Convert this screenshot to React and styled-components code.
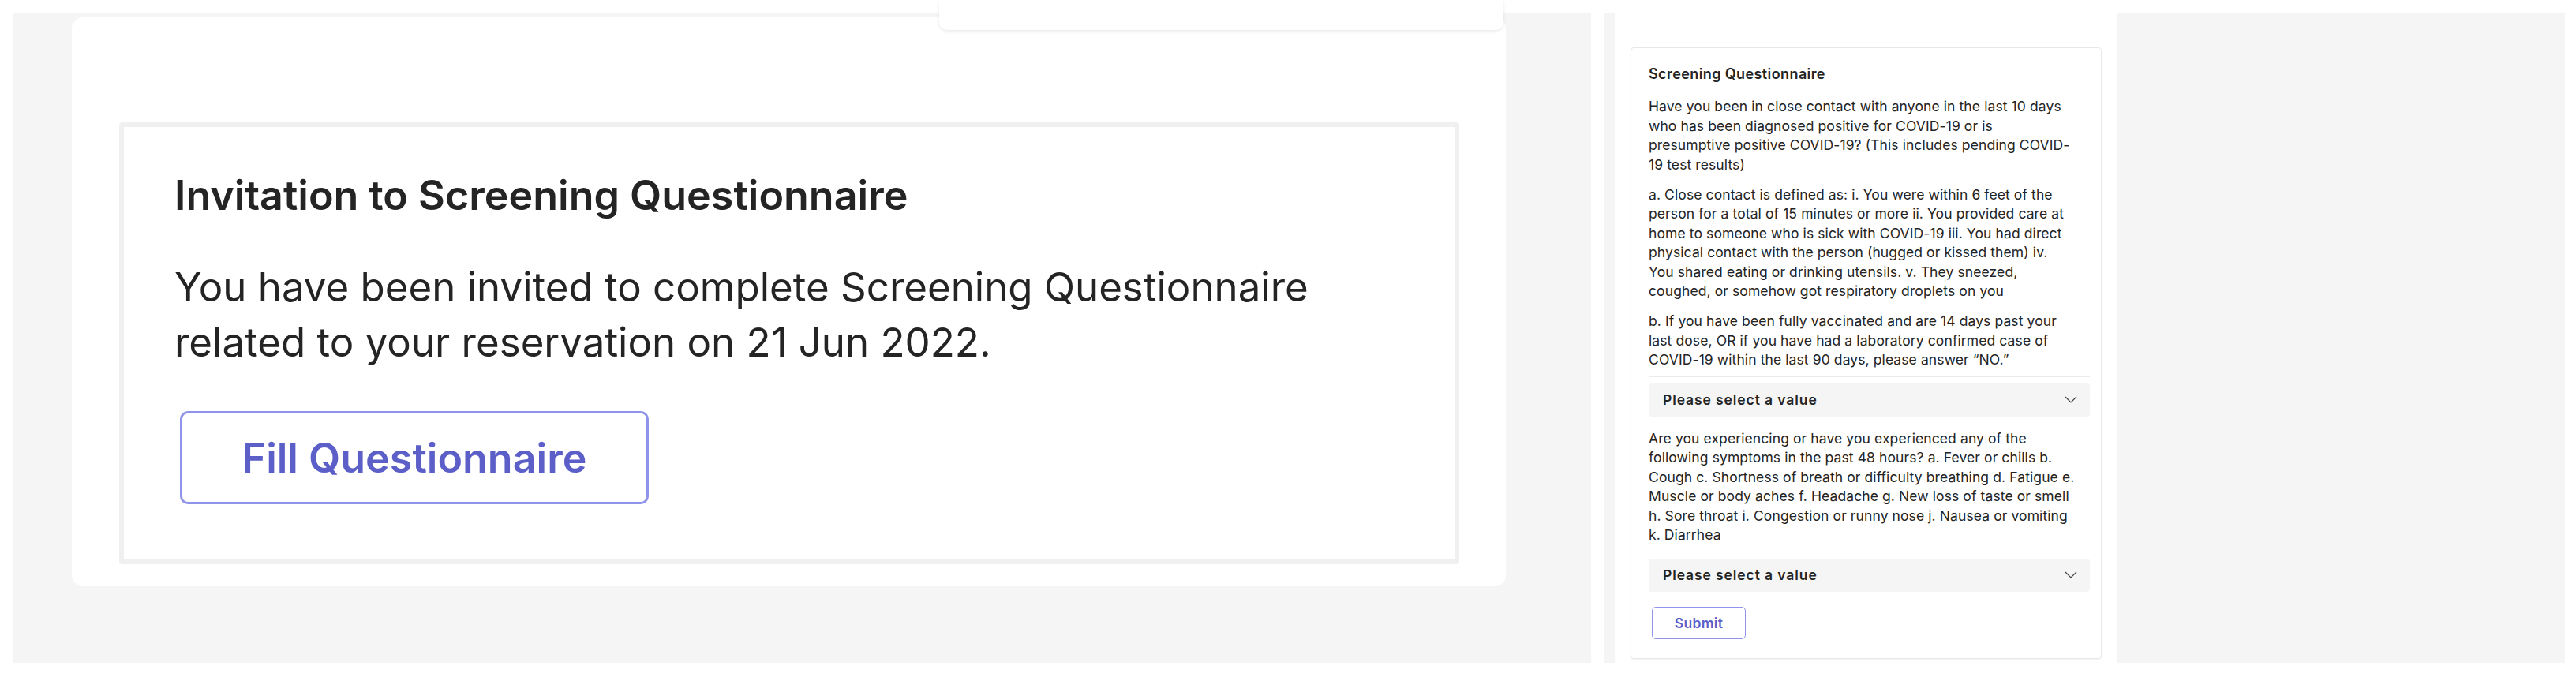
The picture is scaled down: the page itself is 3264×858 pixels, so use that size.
import React from 'react'
import styled, { createGlobalStyle } from 'styled-components'

const Global = createGlobalStyle`
  html, body {
    margin: 0;
    padding: 0;
    background: #ffffff;
  }
  body {
    font-family: Inter, "Liberation Sans", sans-serif;
    color: #242424;
  }
`

const Page = styled.div`
  display: flex;
  align-items: stretch;
  height: 823px;
  padding: 17px 0 0 17px;
`

const ChatPane = styled.div`
  position: relative;
  width: 1999px;
  background: #f5f5f5;
  padding: 5px 108px 0 74px;
  box-sizing: border-box;
`

const Popover = styled.div`
  position: absolute;
  left: 1173px;
  top: -17px;
  width: 715px;
  height: 38px;
  background: #ffffff;
  border-radius: 0 0 10px 10px;
  box-shadow: 0 2px 4px rgba(0, 0, 0, 0.08);
`

const MessageCard = styled.div`
  height: 721px;
  box-sizing: border-box;
  background: #ffffff;
  border-radius: 14px;
  padding: 133px 59px 27px 60px;
`

const InviteBox = styled.div`
  border: 6px solid #f0f0f0;
  border-radius: 4px;
  padding: 56px 64px 70px 64px;
  display: flex;
  flex-direction: column;
  align-items: flex-start;
`

const InviteTitle = styled.h2`
  margin: 0;
  font-size: 52px;
  line-height: 62px;
  font-weight: 600;
`

const InviteText = styled.p`
  margin: 50px 0 52px;
  font-size: 51px;
  line-height: 70px;
  font-weight: 400;
`

const BigButton = styled.button`
  margin-left: 7px;
  width: 594px;
  height: 118px;
  background: #ffffff;
  border: 3px solid #8f94ea;
  border-radius: 10px;
  color: #5b5fc7;
  font-family: inherit;
  font-size: 52px;
  font-weight: 600;
`

const Spacer = styled.div`
  width: ${p => p.w}px;
  background: ${p => (p.gray ? '#f5f5f5' : '#ffffff')};
`

const FormColumn = styled.div`
  width: 637px;
  background: #ffffff;
  padding: 43px 20px 0 20px;
  box-sizing: border-box;
`

const FormCard = styled.div`
  border: 1px solid #e8e8e8;
  border-radius: 4px;
  box-shadow: 0 1px 2px rgba(0, 0, 0, 0.06);
  padding: 21px 14px 24px 22px;
`

const FormTitle = styled.div`
  font-size: 18px;
  line-height: 24px;
  font-weight: 600;
  letter-spacing: 0.4px;
  margin-bottom: 17px;
`

const Question = styled.div`
  margin-top: ${p => (p.first ? 0 : 16)}px;
`

const Label = styled.div`
  padding-bottom: 8px;
  border-bottom: 1.5px solid #ebebeb;
`

const Para = styled.p`
  margin: 0 0 13.5px;
  font-size: 17.5px;
  line-height: 24.5px;
  letter-spacing: 0.1px;
  &:last-child {
    margin-bottom: 0;
  }
`

const Line = styled.span`
  display: block;
  white-space: nowrap;
`

const Select = styled.div`
  margin-top: 8px;
  height: 42px;
  background: #f5f5f5;
  border-radius: 4px;
  display: flex;
  align-items: center;
  justify-content: space-between;
  padding: 0 16px 0 18px;
  font-size: 17.5px;
  font-weight: 600;
  letter-spacing: 0.9px;
`

const SubmitButton = styled.button`
  margin: 19px 0 0 4px;
  width: 119px;
  height: 41px;
  background: #ffffff;
  border: 1.5px solid #8f94ea;
  border-radius: 5px;
  color: #5b5fc7;
  font-family: inherit;
  font-size: 17.5px;
  font-weight: 600;
  letter-spacing: 0.3px;
`

const Chevron = () => (
  <svg width="16" height="9" viewBox="0 0 16 9">
    <polyline points="1,1 8,8 15,1" fill="none" stroke="#424242" strokeWidth="1.2" />
  </svg>
)

const questions = [
  [
    [
      'Have you been in close contact with anyone in the last 10 days',
      'who has been diagnosed positive for COVID-19 or is',
      'presumptive positive COVID-19? (This includes pending COVID-',
      '19 test results)',
    ],
    [
      'a. Close contact is defined as: i. You were within 6 feet of the',
      'person for a total of 15 minutes or more ii. You provided care at',
      'home to someone who is sick with COVID-19 iii. You had direct',
      'physical contact with the person (hugged or kissed them) iv.',
      'You shared eating or drinking utensils. v. They sneezed,',
      'coughed, or somehow got respiratory droplets on you',
    ],
    [
      'b. If you have been fully vaccinated and are 14 days past your',
      'last dose, OR if you have had a laboratory confirmed case of',
      'COVID-19 within the last 90 days, please answer “NO.”',
    ],
  ],
  [
    [
      'Are you experiencing or have you experienced any of the',
      'following symptoms in the past 48 hours? a. Fever or chills b.',
      'Cough c. Shortness of breath or difficulty breathing d. Fatigue e.',
      'Muscle or body aches f. Headache g. New loss of taste or smell',
      'h. Sore throat i. Congestion or runny nose j. Nausea or vomiting',
      'k. Diarrhea',
    ],
  ],
]

export default function App() {
  return (
    <>
      <Global />
      <Page>
        <ChatPane>
          <Popover />
          <MessageCard>
            <InviteBox>
              <InviteTitle>Invitation to Screening Questionnaire</InviteTitle>
              <InviteText>
                You have been invited to complete Screening Questionnaire related to your reservation on 21 Jun 2022.
              </InviteText>
              <BigButton>Fill Questionnaire</BigButton>
            </InviteBox>
          </MessageCard>
        </ChatPane>
        <Spacer w={16} />
        <Spacer w={14} gray />
        <FormColumn>
          <FormCard>
            <FormTitle>Screening Questionnaire</FormTitle>
            {questions.map((paras, qi) => (
              <Question key={qi} first={qi === 0}>
                <Label>
                  {paras.map((lines, pi) => (
                    <Para key={pi}>
                      {lines.map((l, li) => (
                        <Line key={li}>{l}</Line>
                      ))}
                    </Para>
                  ))}
                </Label>
                <Select>
                  Please select a value
                  <Chevron />
                </Select>
              </Question>
            ))}
            <SubmitButton>Submit</SubmitButton>
          </FormCard>
        </FormColumn>
        <Spacer w={567} gray />
      </Page>
    </>
  )
}
